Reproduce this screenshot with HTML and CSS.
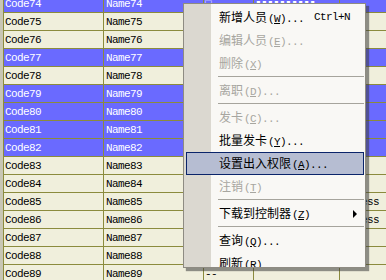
FILE: index.html
```html
<!DOCTYPE html>
<html lang="en">
<head>
  <meta charset="UTF-8">
  <title>人员管理</title>
  <link rel="stylesheet" href="styles.css">
</head>
<body>
  <div class="grid">
    <div class="row sel"><div class="cell">Code74</div><div class="cell">Name74</div><div class="cell">□</div><div class="cell">▮▮▮▮▮▮▮▮▮▮</div><div class="cell"></div></div>
    <div class="row"><div class="cell">Code75</div><div class="cell">Name75</div><div class="cell">--</div><div class="cell"></div><div class="cell"></div></div>
    <div class="row"><div class="cell">Code76</div><div class="cell">Name76</div><div class="cell">--</div><div class="cell"></div><div class="cell"></div></div>
    <div class="row sel"><div class="cell">Code77</div><div class="cell">Name77</div><div class="cell">--</div><div class="cell"></div><div class="cell"></div></div>
    <div class="row"><div class="cell">Code78</div><div class="cell">Name78</div><div class="cell">--</div><div class="cell"></div><div class="cell"></div></div>
    <div class="row sel"><div class="cell">Code79</div><div class="cell">Name79</div><div class="cell">--</div><div class="cell"></div><div class="cell"></div></div>
    <div class="row sel"><div class="cell">Code80</div><div class="cell">Name80</div><div class="cell">--</div><div class="cell"></div><div class="cell"></div></div>
    <div class="row sel"><div class="cell">Code81</div><div class="cell">Name81</div><div class="cell">--</div><div class="cell"></div><div class="cell"></div></div>
    <div class="row sel"><div class="cell">Code82</div><div class="cell">Name82</div><div class="cell">--</div><div class="cell"></div><div class="cell"></div></div>
    <div class="row"><div class="cell">Code83</div><div class="cell">Name83</div><div class="cell">--</div><div class="cell"></div><div class="cell"></div></div>
    <div class="row"><div class="cell">Code84</div><div class="cell">Name84</div><div class="cell">--</div><div class="cell"></div><div class="cell"></div></div>
    <div class="row"><div class="cell">Code85</div><div class="cell">Name85</div><div class="cell">--</div><div class="cell"></div><div class="cell">Access</div></div>
    <div class="row"><div class="cell">Code86</div><div class="cell">Name86</div><div class="cell">--</div><div class="cell"></div><div class="cell">Access</div></div>
    <div class="row"><div class="cell">Code87</div><div class="cell">Name87</div><div class="cell">--</div><div class="cell"></div><div class="cell"></div></div>
    <div class="row"><div class="cell">Code88</div><div class="cell">Name88</div><div class="cell">--</div><div class="cell"></div><div class="cell"></div></div>
    <div class="row"><div class="cell">Code89</div><div class="cell">Name89</div><div class="cell">--</div><div class="cell"></div><div class="cell"></div></div>
  </div>

  <div class="menu">
    <div class="item"><span class="label">新增人员<span class="mn">(<u>W</u>)...</span></span><span class="mn">Ctrl+N</span></div>
    <div class="item off"><span class="label">编辑人员<span class="mn">(<u>E</u>)...</span></span></div>
    <div class="item off"><span class="label">删除<span class="mn">(<u>X</u>)</span></span></div>
    <div class="sep"></div>
    <div class="item off"><span class="label">离职<span class="mn">(<u>D</u>)...</span></span></div>
    <div class="sep"></div>
    <div class="item off"><span class="label">发卡<span class="mn">(<u>C</u>)...</span></span></div>
    <div class="item"><span class="label">批量发卡<span class="mn">(<u>Y</u>)...</span></span></div>
    <div class="item hot"><span class="label">设置出入权限<span class="mn">(<u>A</u>)...</span></span></div>
    <div class="item off"><span class="label">注销<span class="mn">(<u>T</u>)</span></span></div>
    <div class="sep"></div>
    <div class="item"><span class="label">下载到控制器<span class="mn">(<u>Z</u>)</span></span><span class="arrow"></span></div>
    <div class="sep"></div>
    <div class="item"><span class="label">查询<span class="mn">(<u>Q</u>)...</span></span></div>
    <div class="item"><span class="label">刷新<span class="mn">(<u>R</u>)</span></span></div>
  </div>
</body>
</html>
```

FILE: styles.css
```css
* {
  margin: 0;
  padding: 0;
  box-sizing: border-box;
}

body {
  width: 386px;
  height: 280px;
  overflow: hidden;
  background: #c8c6b4;
  font-family: "Liberation Mono", monospace;
  font-size: 11px;
  letter-spacing: -0.6px;
}

.grid {
  margin: -5px 0 0 3px;
  border-left: 1px solid #8b8b3d;
}

.row {
  display: grid;
  grid-template-columns: 100px 100px 50px 86px 1fr;
  height: 18px;
  background: #f0efdc;
  border-bottom: 1px solid #8b8b3d;
  color: #000;
}

.row.sel {
  background: #6a6aff;
  color: #fff;
}

.cell {
  border-right: 1px solid #8b8b3d;
  padding: 1px 0 0 1px;
  line-height: 16px;
  white-space: nowrap;
  overflow: hidden;
}

.cell:nth-child(2) {
  padding-left: 2px;
}

.cell:nth-child(5) {
  padding-left: 3px;
  border-right: none;
}

/* context menu */
.menu {
  position: absolute;
  left: 183px;
  top: 3px;
  width: 183px;
  height: 265px;
  overflow: hidden;
  padding: 2px 1px 0 2px;
  border: 1px solid #8e8b82;
  background: linear-gradient(to right, #dbd8d0 27px, #f9f8f5 27px);
  box-shadow: 3px 3px 1px rgba(60, 60, 60, 0.55);
  font-family: "Noto Sans CJK SC", sans-serif;
  font-size: 12px;
  letter-spacing: 0;
  color: #000;
}

.item {
  display: flex;
  align-items: center;
  height: 23px;
  padding: 0 6px 0 32px;
  border: 1px solid transparent;
  line-height: 1;
}

.item .label {
  width: 94px;
  white-space: nowrap;
}

.mn {
  font-family: "Liberation Mono", monospace;
  font-size: 11px;
  letter-spacing: -0.6px;
  margin-left: 1px;
}

.item.off {
  color: #a7a6a0;
}

.item.hot {
  background: #b6bdd2;
  border-color: #0a246a;
}

.arrow {
  margin-left: auto;
  width: 0;
  height: 0;
  border-top: 4px solid transparent;
  border-bottom: 4px solid transparent;
  border-left: 4px solid #000;
}

.sep {
  height: 4px;
  margin-left: 32px;
  padding-top: 1px;
}

.sep::after {
  content: "";
  display: block;
  height: 1px;
  background: #a6a49c;
}
```
